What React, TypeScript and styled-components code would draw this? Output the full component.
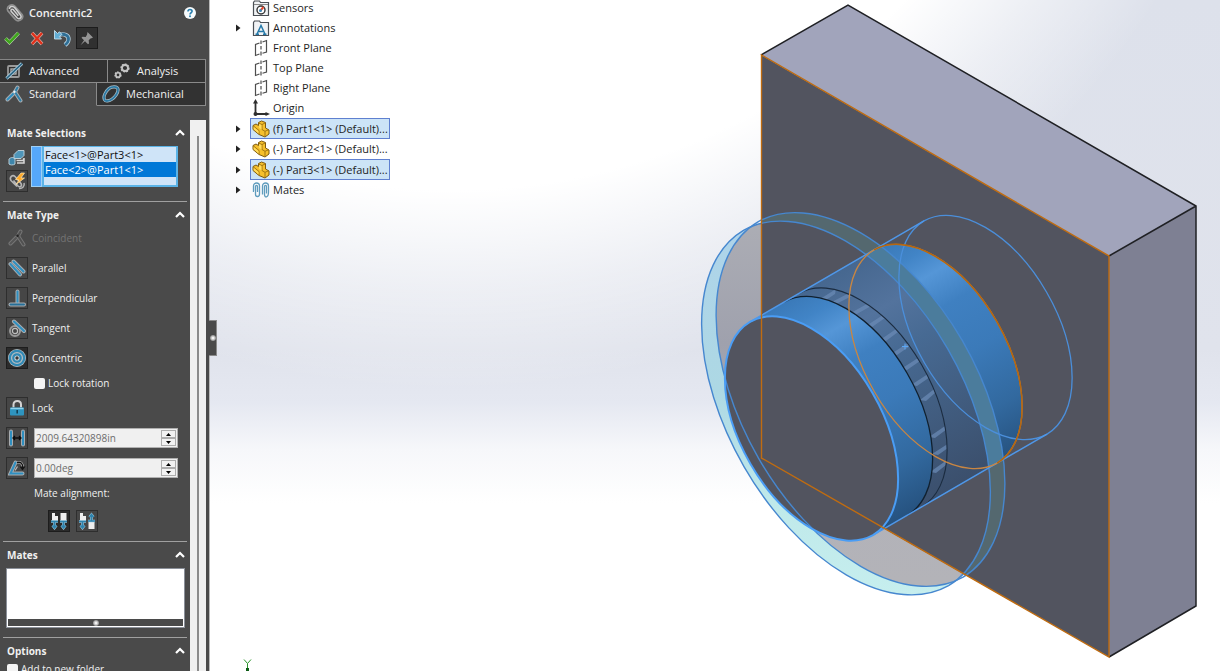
import React from "react";
import styled, { createGlobalStyle, css } from "styled-components";

const GlobalStyle = createGlobalStyle`
  *, *::before, *::after { box-sizing: border-box; }
  body { margin: 0; background: #fff; }
  body, button, input { font-family: "Open Sans", "Noto Sans", sans-serif; font-size: 11px; line-height: 16px; }
  h1, h2, ul, p { margin: 0; padding: 0; }
  ul { list-style: none; }
  button { margin: 0; padding: 0; border: 0; background: none; color: inherit; }
  svg { display: block; }
`;

const Page = styled.div`
  display: grid;
  grid-template-columns: 210px 1fr;
  height: 100vh;
  overflow: hidden;
`;

const Sidebar = styled.aside`
  display: flex;
  flex-direction: column;
  min-height: 0;
  height: 100vh;
  background: #4a4a4a;
  border-right: 1px solid #b9b9b9;
  color: #f0f0f0;
`;

const TitleBar = styled.header`
  display: flex;
  align-items: center;
  flex: none;
  height: 26px;
  padding: 0 13px 0 5px;
  gap: 4px;
`;

const Title = styled.h1`
  flex: 1;
  font-size: 11px;
  line-height: 16px;
  font-weight: 600;
`;

const Toolbar = styled.div`
  display: flex;
  align-items: center;
  flex: none;
  height: 24px;
  padding: 0 1px;
  gap: 3px;
`;

const ToolButton = styled.button<{ $pressed?: boolean }>`
  display: grid;
  place-items: center;
  flex: none;
  width: 22px;
  height: 22px;
  ${(p) => p.$pressed && css`background: #303030; border: 1px solid #1c1c1c;`}
`;

const TabRows = styled.nav`
  flex: none;
  margin: 9px 3px 0 0;
  border-top: 1px solid #858585;
`;

const TabRow = styled.div`
  display: flex;
  height: 23px;
`;

const Tab = styled.button<{ $active?: boolean; $width: number }>`
  display: flex;
  align-items: center;
  gap: 6px;
  flex: ${(p) => (p.$width ? `0 0 ${p.$width}px` : 1)};
  padding: 0 0 0 5px;
  text-align: left;
  background: #323232;
  border-right: 1px solid #8a8a8a;
  border-bottom: 1px solid #8a8a8a;
  ${(p) => p.$active && css`background: transparent; border-bottom-color: transparent;`}
`;

const Body = styled.div`
  display: flex;
  flex: 1;
  min-height: 0;
  margin-top: 14px;
`;

const Sections = styled.div`
  flex: 1;
  min-width: 0;
  overflow: hidden;
  padding: 0 3px;
  font-size: 10px;
`;

const ScrollTrack = styled.div`
  flex: none;
  width: 16px;
  margin-right: 3px;
  padding: 16px 7px 0;
  background: #f0f0f0;
`;

const ScrollThumb = styled.div`
  height: 100%;
  background: #8b8b8b;
`;

const Section = styled.section`
  padding-bottom: 9px;
  & + & { border-top: 1px solid #a0a0a0; }
`;

const SectionHead = styled.button`
  display: flex;
  align-items: center;
  justify-content: space-between;
  width: 100%;
  height: 26px;
  padding: 0 2px 0 4px;
`;

const SectionTitle = styled.span`
  font-size: 10px;
  line-height: 16px;
  font-weight: 700;
`;

/* Rows of a section, drawn up close under its heading. */
const Rows = styled.div`
  margin-top: -5px;
`;

const Selections = styled.div`
  display: flex;
  gap: 3px;
  padding: 0 9px 0 3px;
`;

const IconStack = styled.div`
  display: grid;
  gap: 2px;
`;

const IconBox = styled.button<{ $tone?: "plain" | "raised" | "dark" }>`
  display: grid;
  place-items: center;
  flex: none;
  width: 22px;
  height: 22px;
  border: 1px solid transparent;
  ${(p) => p.$tone === "raised" && css`border-color: #2e2e2e; background: #464646;`}
  ${(p) => p.$tone === "dark" && css`border-color: #1d1d1d; background: #2b2b2b;`}
`;

const SelectionList = styled.div`
  display: flex;
  flex: 1;
  height: 41px;
`;

const ColorStrip = styled.div`
  width: 11px;
  background: #56a8fb;
  border: 1px solid #9fd0f5;
`;

const SelectionItems = styled.ul`
  flex: 1;
  border: 2px solid #5bb3e6;
  border-top-width: 1px;
  background: #cfe4f8;
  color: #101010;
  font-size: 11px;
`;

const SelectionItem = styled.li<{ $selected?: boolean }>`
  height: 15px;
  padding-left: 1px;
  line-height: 15px;
  ${(p) => p.$selected && css`background: #0078d7; color: #fff;`}
`;

const MateRow = styled.div<{ $disabled?: boolean }>`
  display: flex;
  align-items: center;
  height: 30px;
  padding-left: 3px;
  gap: 4px;
  color: ${(p) => (p.$disabled ? "#747474" : "#f0f0f0")};
`;

const CheckRow = styled.label<{ $indent: number }>`
  display: flex;
  align-items: center;
  gap: 3px;
  height: 20px;
  padding-left: ${(p) => p.$indent}px;
`;

const CheckBox = styled.input`
  appearance: none;
  flex: none;
  width: 11px;
  height: 11px;
  margin: 0;
  border-radius: 2px;
  background: #f4f4f4;
`;

const Spinner = styled.div`
  display: flex;
  flex: 1;
  min-width: 0;
  height: 20px;
  margin: 0 9px 0 2px;
  padding: 1px;
  border: 1px solid #b0b0b0;
  background: #f0f0f0;
`;

const SpinInput = styled.input`
  flex: 1;
  min-width: 0;
  padding: 0;
  border: 0;
  background: transparent;
  color: #6d6d6d;
  font-size: 10px;
`;

const SpinButtons = styled.div`
  display: grid;
  grid-template-rows: 1fr 1fr;
  width: 15px;
`;

const SpinButton = styled.button`
  display: grid;
  place-items: center;
  border: 1px solid #adadad;
  background: #f2f2f2;
`;

const AlignLabel = styled.p`
  height: 20px;
  padding-left: 31px;
  line-height: 20px;
`;

const AlignRow = styled.div`
  display: flex;
  gap: 6px;
  padding: 7px 0 0 45px;
`;

const MatesList = styled.div`
  display: flex;
  flex-direction: column;
  height: 60px;
  margin: 0 2px 0 3px;
  border: 1px solid #8b9099;
  background: #fff;
`;

const MatesGrip = styled.div`
  display: grid;
  place-items: center;
  height: 7px;
  margin: auto 1px 1px;
  background: #4a4a4a;
`;

const GripDot = styled.span`
  width: 6px;
  height: 6px;
  border-radius: 50%;
  background: radial-gradient(#fff 10%, #6a6a6a 90%);
`;

const Viewport = styled.main`
  display: grid;
  min-width: 0;
  min-height: 0;
  background:
    radial-gradient(circle at 240px -450px, #fff 640px, rgba(255, 255, 255, 0.45) 740px, rgba(255, 255, 255, 0) 840px),
    linear-gradient(180deg, #dde1eb 0%, #e0e3ec 52%, #e5e8f1 60%, #f6f7fa 67%, #fff 75%);
  & > * { grid-area: 1 / 1; }
`;

const Model = styled.svg`
  width: 100%;
  height: 100%;
`;

const SplitterHandle = styled.button`
  display: grid;
  place-items: center;
  align-self: center;
  justify-self: start;
  z-index: 1;
  width: 8px;
  height: 36px;
  margin: 4px 0 0 -1px;
  border: 1px solid #8a8a8a;
  border-left: 0;
  background: #4a4a4a;
`;

const Tree = styled.ul`
  align-self: start;
  justify-self: start;
  z-index: 1;
  margin: -2px 0 0 25px;
  color: #1e1e1e;
`;

const TreeRow = styled.li`
  display: flex;
  align-items: center;
`;

const Twisty = styled.span`
  width: 15px;
`;

const TreeLabel = styled.button<{ $selected?: boolean }>`
  display: flex;
  align-items: center;
  gap: 3px;
  height: ${(p) => (p.$selected ? 21 : 20)}px;
  padding: 0 1px;
  border: 1px solid ${(p) => (p.$selected ? "#5f80d0" : "transparent")};
  background: ${(p) => (p.$selected ? "#cce4f7" : "transparent")};
  white-space: nowrap;
`;

type IconProps = { size?: number; children: React.ReactNode };
const Icon = ({ size = 18, children }: IconProps) => (
  <svg width={size} height={size} viewBox="0 0 18 18" fill="none" aria-hidden="true">
    {children}
  </svg>
);

/* A light-edged bar, the stroke style shared by the mate icons. */
const Bar = ({ d, color = "#2f8fc0", edge = "#a9adb0" }: { d: string; color?: string; edge?: string }) => (
  <>
    <path d={d} stroke={edge} strokeWidth="4" strokeLinecap="round" />
    <path d={d} stroke={color} strokeWidth="2" strokeLinecap="round" />
  </>
);

const ClipIcon = () => (
  <Icon size={20}>
    <path d="M5.500 10.500 9.500 15c2.500 2.500 8-.5 6-4.500L9 3C6.500.3.800 2.500 2.500 7l3 3.500" stroke="#8f8f8f" strokeWidth="1.500" />
    <path d="M4 5.500c0-3 3.500-3 5-1l5 6.500c1.500 2-1 4.300-3 2.500L5.500 7.500c-.7-1.500 1-2.500 2-1.500l4.500 5.500" stroke="#cfcfcf" strokeWidth="1.400" />
  </Icon>
);

const HelpIcon = () => (
  <svg width="12" height="12" viewBox="0 0 12 12">
    <circle cx="6" cy="6" r="6" fill="#f7fbfd" />
    <path d="M4 4.600c0-2.700 4.100-2.600 4.100-.3C8.100 5.800 6 5.700 6 7.500" fill="none" stroke="#2a7fae" strokeWidth="1.600" />
    <circle cx="6" cy="9.300" r="1" fill="#2a7fae" />
  </svg>
);

const OkIcon = () => (
  <Icon size={18}>
    <path d="M2.500 9.500 6.500 13.500 15.500 4" stroke="#c9dcc0" strokeWidth="3.600" />
    <path d="M2.500 9.500 6.500 13.500 15.500 4" stroke="#3fa51c" strokeWidth="2.600" />
  </Icon>
);

const CancelIcon = () => (
  <Icon size={18}>
    <path d="M4 4 14 15M14 4 4 15" stroke="#d6b1aa" strokeWidth="3.600" />
    <path d="M4 4 14 15M14 4 4 15" stroke="#e0301a" strokeWidth="2.400" />
  </Icon>
);

const UndoIcon = () => (
  <Icon size={18}>
    <path d="M6 6c5-2 10 .5 9.500 4.500-.2 2.300-1.500 4-3.500 5.500" stroke="#b9d4e3" strokeWidth="4.200" />
    <path d="M6 6c5-2 10 .5 9.500 4.500-.2 2.300-1.500 4-3.500 5.500" stroke="#2f6f96" strokeWidth="2.800" />
    <path d="M1.500 1.500v8.500h7L6.300 7.500 9 5.500 6.500 2.800 4.500 4.500z" fill="#62aed6" stroke="#c5dfec" strokeWidth=".9" />
  </Icon>
);

const PinIcon = () => (
  <Icon size={18}>
    <path d="M9.500 3 15 8.500l-1.500.7-1 .3-1.800 1.800.3 3.200-1 .8-3-3-4.500 4 3.500-5-2.500-2.500 1-1 3.200.2L9 5.800z" fill="#949494" />
  </Icon>
);

const AdvancedIcon = () => (
  <Icon size={18}>
    <rect x="3" y="4" width="11" height="11" rx="1" stroke="#9a9a9a" strokeWidth="1.800" />
    <rect x="6" y="7" width="5" height="5" stroke="#b5b5b5" strokeWidth="1.300" />
    <path d="M1.500 16.500 17 1.500" stroke="#a9c8d8" strokeWidth="3.200" />
    <path d="M1.500 16.500 17 1.500" stroke="#25607f" strokeWidth="1.600" />
  </Icon>
);

const AnalysisIcon = () => (
  <Icon size={18}>
    <circle cx="12" cy="6" r="3.600" stroke="#d0d0d0" strokeWidth="2" strokeDasharray="1.800 .9" />
    <circle cx="12" cy="6" r="3" stroke="#c4c4c4" strokeWidth="1.800" />
    <circle cx="5" cy="13" r="2.700" stroke="#d0d0d0" strokeWidth="1.800" strokeDasharray="1.500 .8" />
    <circle cx="5" cy="13" r="2.200" stroke="#c4c4c4" strokeWidth="1.600" />
  </Icon>
);

const CoincidentIcon = ({ muted = false }: { muted?: boolean }) => (
  <Icon size={18}>
    <Bar d="M2.500 14.500 8.500 8.500" color={muted ? "#555" : "#2f8fc0"} edge={muted ? "#767676" : "#a9adb0"} />
    <Bar d="M12.500 2.500 10 7l5.500 8.500" color={muted ? "#505050" : "#2f7fa8"} edge={muted ? "#767676" : "#a9adb0"} />
    <circle cx="9.500" cy="6.800" r="1.200" fill={muted ? "#222" : "#e8f4fa"} />
  </Icon>
);

const CamIcon = () => (
  <Icon>
    <path d="M2.500 14.800C.8 11.500 3.500 6.500 7 3.500c2.500-2 8.500-2.500 9 .8.400 3.200-3 8-6.500 10.200-2.500 1.600-6 2.200-7 .3z" stroke="#a9bcc6" strokeWidth="3.200" />
    <path d="M2.500 14.800C.8 11.500 3.500 6.500 7 3.500c2.500-2 8.500-2.500 9 .8.400 3.200-3 8-6.500 10.200-2.500 1.600-6 2.200-7 .3z" stroke="#2c7ba5" strokeWidth="1.800" />
  </Icon>
);

const EntitiesIcon = () => (
  <Icon size={18}>
    <path d="M1 11c2-2 5-2 6 0v5c-2 1.500-5 1-6 0z" fill="#3f86ab" stroke="#b8ccd6" />
    <path d="M6 6.500l4-4h6v5l-3 3H6z" fill="#4f96ba" stroke="#b8ccd6" />
    <path d="M8.500 12.500h7v-2M16 10v5H9" stroke="#d8d8d8" strokeWidth="1.500" />
  </Icon>
);

const MultiMateIcon = () => (
  <Icon size={18}>
    <path d="M9 14.500 3 8.500C1 5.500 4.500 2 7 4.500l6 7c1.500 2.500-1 4.500-3 2.500L5.500 8.500" stroke="#b5b5b5" strokeWidth="1.600" />
    <path d="M16 11c1 3-1.500 6-5 5.500" stroke="#b5b5b5" strokeWidth="1.500" />
    <path d="M13 1 7.500 7.500l3.500.5-3 4.500L16.500 6H13l3.500-5z" fill="#ffa928" stroke="#ffe9b8" strokeWidth=".7" />
  </Icon>
);

const ParallelIcon = () => (
  <Icon>
    <Bar d="M2.500 5 12 15.500" />
    <Bar d="M5.500 2.500 15.500 12.500" />
  </Icon>
);

const PerpendicularIcon = () => (
  <Icon>
    <Bar d="M9.500 2.500V14" />
    <Bar d="M2.500 15.500h13.500" color="#256f98" />
  </Icon>
);

const TangentIcon = () => (
  <Icon>
    <circle cx="7" cy="12" r="5" stroke="#9a9a9a" strokeWidth="2" />
    <circle cx="7" cy="12" r="2.600" stroke="#c0c0c0" strokeWidth="1.200" />
    <Bar d="M6 2.500 16 12" />
  </Icon>
);

const ConcentricIcon = () => (
  <Icon>
    <circle cx="9" cy="9" r="9" fill="#b4bcc0" />
    <circle cx="9" cy="9" r="7.200" stroke="#3189b4" strokeWidth="2.200" />
    <circle cx="9" cy="9" r="3.700" fill="#d5dde1" stroke="#3189b4" strokeWidth="2.200" />
    <circle cx="9" cy="9" r="1.700" fill="#3a3a3a" />
  </Icon>
);

const LockIcon = () => (
  <Icon>
    <path d="M5.500 8.500V5.500C5.500.7 13 .7 13 5.500v3" stroke="#d3d3d3" strokeWidth="2" />
    <rect x="2" y="8.500" width="14" height="8" rx="1" fill="#2e94bf" />
    <path d="M2.500 9.500h13" stroke="#8fd2ec" strokeWidth="1.500" />
    <path d="M9.200 11v3.500" stroke="#123e52" strokeWidth="1.600" />
  </Icon>
);

const DistanceIcon = () => (
  <Icon>
    <Bar d="M3 2.500v13" />
    <Bar d="M15 2.500v13" />
    <path d="M5 9h8M7 7 5 9l2 2M11 7l2 2-2 2" stroke="#0c0c0c" strokeWidth="1.300" />
  </Icon>
);

const AngleIcon = () => (
  <Icon>
    <Bar d="M7.500 3.500 2.500 14.500h12" />
    <path d="M9 3.500c4-1 6 1.500 5.500 5" stroke="#c2c2c2" strokeWidth="2.500" />
    <path d="M9 3.500c4-1 6 1.500 5.500 5" stroke="#141414" strokeWidth="1.300" />
    <path d="M11.500 7.500h6l-3 4z" fill="#141414" />
    <path d="M7 11.500 9.500 7.500" stroke="#bbb" strokeWidth="1.200" />
  </Icon>
);

const Arrow = ({ d }: { d: string }) => (
  <>
    <path d={d} stroke="#9ec5d9" strokeWidth="2.600" />
    <path d={d} stroke="#2d83ae" strokeWidth="1.500" />
  </>
);

const AlignedIcon = ({ anti = false }: { anti?: boolean }) => (
  <Icon>
    <path d="M2 1h3v3h3v5H2z" fill="#eee" />
    <Arrow d="M1 9.500h7M4.500 9.500v6M2.500 13.500l2 2.500 2-2.500" />
    <path d={anti ? "M10.500 10h6v7h-6z" : "M10.500 1h6v8h-6z"} fill="#eee" />
    <Arrow d={anti ? "M10 9h7M13.500 9V3M11.500 5l2-2.500 2 2.500" : "M10 9.500h7M13.500 9.500v6M11.500 13.500l2 2.500 2-2.500"} />
  </Icon>
);

const ChevronUp = () => (
  <svg width="10" height="8" viewBox="0 0 10 8" fill="none" aria-hidden="true">
    <path d="M1 6 5 2l4 4" stroke="#fff" strokeWidth="2.200" />
  </svg>
);

const Triangle = ({ down = false }: { down?: boolean }) => (
  <svg width="5" height="3" viewBox="0 0 5 3" aria-hidden="true">
    <path d={down ? "M0 0h5L2.500 3z" : "M0 3h5L2.500 0z"} fill="#000" />
  </svg>
);

const FolderShape = () => (
  <path d="M1.500 16.500V3.500l1-1.500h5l1 1.500h8v13z" fill="#f1f3f5" stroke="#4a4f55" strokeWidth="1.200" />
);

const SensorsIcon = () => (
  <Icon>
    <FolderShape />
    <path d="M2 5.500h14" stroke="#888" />
    <circle cx="9" cy="11" r="4" fill="#fff" stroke="#333" strokeWidth="1.400" />
    <path d="M8.500 11.500 11.500 8" stroke="#e2482f" strokeWidth="2" />
    <circle cx="8.500" cy="11.500" r="1.500" fill="#3d88b8" />
  </Icon>
);

const AnnotationsIcon = () => (
  <Icon>
    <FolderShape />
    <path d="M5 15 9 6.500 13 15M6.500 12.500h5M3.500 15.200h3.500M11 15.200h3.500" stroke="#2478a8" strokeWidth="1.500" />
  </Icon>
);

const PlaneIcon = () => (
  <Icon>
    <path d="M7.500 4 3.500 5.500V16.500L7.500 15M10.500 3l4-1.500V13l-4 1.200" stroke="#4d4d4d" strokeWidth="1.200" />
    <path d="M9 1.500v3.500M9 7v3.500M9 12.500V16.500" stroke="#4d4d4d" strokeWidth="1.200" />
  </Icon>
);

const OriginIcon = () => (
  <Icon>
    <path d="M3.500 4v11H15" stroke="#2e2e2e" strokeWidth="1.800" />
    <path d="M3.500 0 6 4.500H1zM18 15l-4.500 2v-4z" fill="#2e2e2e" />
    <circle cx="3.500" cy="15" r="2" fill="#2e2e2e" />
  </Icon>
);

const PartIcon = () => (
  <Icon>
    <path d="M1 5.500 4 4l2.500 1.500V2.500L9.500 1l4 1.500V8l3.500 2v4l-4 3L7 14.500 1 9.500z" fill="#f6c02c" stroke="#7d5a10" />
    <path d="M6.500 3 10 4.500v5l3 1.800v5M10 4.500l3-1.500M13 11.300l3.500-1.500M1.500 6l5.500 4.500V14" stroke="#9a7010" strokeWidth=".9" />
    <path d="M7 4 9.500 5v4.300L7 8zM1.700 7l4.800 4v2.500L1.700 9.200z" fill="#ffdc5e" />
  </Icon>
);

const MatesIcon = () => (
  <Icon>
    <path d="M1.500 11V5c0-4 6-4 6 0v8c0 3.500-4 3-4 .5V5.500c0-1.500 2-1.500 2 0V11" stroke="#5f9cbd" strokeWidth="1.300" />
    <path d="M10.500 13.500V5c0-4 6-4 6 0v6c0 6-4 6-4 2.500V5.500c0-1.500 2-1.500 2 0v7" stroke="#5f9cbd" strokeWidth="1.300" />
  </Icon>
);

const tree: { label: string; icon: React.ReactNode; expandable?: boolean; selected?: boolean }[] = [
  { label: "Sensors", icon: <SensorsIcon /> },
  { label: "Annotations", icon: <AnnotationsIcon />, expandable: true },
  { label: "Front Plane", icon: <PlaneIcon /> },
  { label: "Top Plane", icon: <PlaneIcon /> },
  { label: "Right Plane", icon: <PlaneIcon /> },
  { label: "Origin", icon: <OriginIcon /> },
  { label: "(f) Part1<1> (Default)...", icon: <PartIcon />, expandable: true, selected: true },
  { label: "(-) Part2<1> (Default)...", icon: <PartIcon />, expandable: true },
  { label: "(-) Part3<1> (Default)...", icon: <PartIcon />, expandable: true, selected: true },
  { label: "Mates", icon: <MatesIcon />, expandable: true },
];

const mateTypes: { label: string; icon: React.ReactNode; tone: "plain" | "raised" | "dark"; disabled?: boolean }[] = [
  { label: "Coincident", icon: <CoincidentIcon muted />, tone: "plain", disabled: true },
  { label: "Parallel", icon: <ParallelIcon />, tone: "raised" },
  { label: "Perpendicular", icon: <PerpendicularIcon />, tone: "raised" },
  { label: "Tangent", icon: <TangentIcon />, tone: "raised" },
  { label: "Concentric", icon: <ConcentricIcon />, tone: "dark" },
];

/* Isometric circles: every one is the same ellipse shape turned by 60 degrees. */
const LONG = 1.2247;
const SHORT = 0.7071;

type Ring = { cx: number; cy: number; r: number };
const SHAFT_R = 100.5;
const DISC_R = 167.5;
const front: Ring = { cx: 811.5, cy: 428.5, r: SHAFT_R };
const discCutFront: Ring = { cx: 846, cy: 408.5, r: SHAFT_R };
const discCutBack: Ring = { cx: 860.5, cy: 400, r: SHAFT_R };
const seat: Ring = { cx: 935.5, cy: 356.5, r: SHAFT_R };
const rear: Ring = { cx: 985.5, cy: 327.5, r: SHAFT_R };
const discFront: Ring = { cx: 846, cy: 408, r: DISC_R };
const discBack: Ring = { cx: 860.5, cy: 399.5, r: DISC_R };

const axisEnds = ({ cx, cy, r }: Ring) => {
  const dx = r * LONG * 0.5;
  const dy = r * LONG * 0.866;
  return { top: `${cx - dx} ${cy - dy}`, bottom: `${cx + dx} ${cy + dy}` };
};
const arcTo = (r: number, sweep: 0 | 1, point: string) => `A${r * LONG} ${r * SHORT} 60 0 ${sweep} ${point}`;
const ringPath = (ring: Ring) => {
  const { top, bottom } = axisEnds(ring);
  return `M${top}${arcTo(ring.r, 1, bottom)}${arcTo(ring.r, 1, top)}Z`;
};
const backHalf = (ring: Ring) => {
  const { top, bottom } = axisEnds(ring);
  return `M${top}${arcTo(ring.r, 1, bottom)}`;
};
/* Visible side of the shaft between two of its circles. */
const shaftSide = (a: Ring, b: Ring) => {
  const p = axisEnds(a);
  const q = axisEnds(b);
  return `M${p.top}L${q.top}${arcTo(b.r, 1, q.bottom)}L${p.bottom}${arcTo(a.r, 0, p.top)}Z`;
};
const silhouette = (a: Ring, b: Ring) => {
  const p = axisEnds(a);
  const q = axisEnds(b);
  return `M${p.top}L${q.top}M${p.bottom}L${q.bottom}`;
};

const glints = [
  [819, 297, 834, 290], [830, 300, 851, 292], [851, 310, 872, 301], [868, 322, 884, 314],
  [882, 336, 897, 328], [893, 350, 909, 342], [903, 365, 919, 357], [913, 381, 929, 373],
  [922, 396, 935, 388], [931, 433, 946, 425], [934, 450, 947, 444], [932, 468, 945, 461],
];

const AssemblyModel = () => (
  <Model viewBox="210 0 1010 671" preserveAspectRatio="xMidYMid meet" role="img" aria-label="Assembly model">
    <defs>
      <linearGradient id="shaft" gradientUnits="userSpaceOnUse" x1="749.7" y1="321.5" x2="873.3" y2="535.5">
        <stop offset="0" stopColor="#3a79b8" />
        <stop offset=".1" stopColor="#4184c6" />
        <stop offset=".2" stopColor="#5596d7" />
        <stop offset=".34" stopColor="#3f80c1" />
        <stop offset=".55" stopColor="#3b7ab9" />
        <stop offset=".8" stopColor="#32699f" />
        <stop offset="1" stopColor="#26527f" />
      </linearGradient>
      <linearGradient id="veil" gradientUnits="userSpaceOnUse" x1="749.7" y1="321.5" x2="873.3" y2="535.5">
        <stop offset="0" stopColor="#46678f" />
        <stop offset=".22" stopColor="#53739d" />
        <stop offset=".4" stopColor="#476a93" />
        <stop offset="1" stopColor="#3b4f6c" />
      </linearGradient>
      <linearGradient id="rim" x1="0" y1="0" x2="0" y2="1">
        <stop offset="0" stopColor="#aed3ea" />
        <stop offset=".45" stopColor="#add8e4" />
        <stop offset=".75" stopColor="#bfe9ea" />
        <stop offset="1" stopColor="#c6eeee" />
      </linearGradient>
      <linearGradient id="glass" x1="0" y1="0" x2="0" y2="1">
        <stop offset="0" stopColor="#adaeb5" />
        <stop offset=".35" stopColor="#9fa1ad" />
        <stop offset=".75" stopColor="#b2b2b9" />
        <stop offset="1" stopColor="#b3b3b8" />
      </linearGradient>
      <clipPath id="inDiscFront"><path d={ringPath(discFront)} /></clipPath>
      <clipPath id="inDiscBack"><path d={ringPath(discBack)} /></clipPath>
      <clipPath id="onPlate"><path d="M761 55 1109 256V657L761 458Z" /></clipPath>
      <clipPath id="onShaft"><path d={shaftSide(front, seat)} /></clipPath>
      <clipPath id="sharedBand"><path d={shaftSide(discCutFront, discCutBack)} /></clipPath>
    </defs>

    <path d={ringPath(discFront)} fill="url(#rim)" />
    <g clipPath="url(#inDiscFront)"><path d={ringPath(discBack)} fill="url(#glass)" /></g>

    <path d="M761 55 848 5 1196 206 1109 256Z" fill="#a1a4bb" />
    <path d="M1109 256 1196 206V606L1109 657Z" fill="#7e8093" />
    <path d="M761 55 1109 256V657L761 458Z" fill="#52545f" />
    <path d="M761 55 848 5 1196 206V606L1109 657M1109 256 1196 206" fill="none" stroke="#1f2024" strokeWidth="1.500" />

    <g clipPath="url(#onPlate)">
      <path d={ringPath(discBack) + ringPath(discFront)} fillRule="evenodd" fill="#54686f" />
      <g clipPath="url(#inDiscFront)"><path d={ringPath(discBack)} fill="#52545f" /></g>
    </g>

    <path d={ringPath(front)} fill="#52545f" />
    <path d={shaftSide(front, seat)} fill="url(#shaft)" />
    <g clipPath="url(#onShaft)">
      <g clipPath="url(#inDiscBack)"><path d={shaftSide(discCutFront, seat)} fill="#4b7c9c" /></g>
      <g clipPath="url(#inDiscFront)">
        <path d={shaftSide(discCutFront, seat)} fill="url(#veil)" />
        <g clipPath="url(#sharedBand)">
          {glints.map(([x1, y1, x2, y2]) => (
            <path key={`${x1}-${y1}`} d={`M${x1 - 2} ${y1 + 4}L${x2 + 2} ${y2 - 1}L${x2 + 1} ${y2 + 4}L${x1 + 4} ${y1 + 5}Z`} fill="#6a8ab4" fillOpacity=".75" />
          ))}
        </g>
      </g>
    </g>

    <g fill="none">
      <path d={backHalf(discCutFront)} stroke="#10202f" strokeWidth="1.300" />
      <path d={backHalf(discCutBack)} stroke="#1b2c40" strokeWidth="1.100" />
      <path d={ringPath(discFront)} stroke="#4687cf" strokeWidth="1.400" />
      <path d={ringPath(discBack)} stroke="#4687cf" strokeWidth="1.400" />
      <path d={ringPath(rear)} stroke="#4b8fdb" strokeWidth="1.300" />
      <path d={silhouette(front, rear)} stroke="#4f97e8" strokeWidth="1.500" />
      <path d={ringPath(seat)} stroke="#c98642" strokeWidth="1.300" />
      <path d={backHalf(seat)} stroke="#b5660f" strokeWidth="1.500" />
      <path d={ringPath(front)} stroke="#4a9df5" strokeWidth="2" />
      <path d="M761.500 55V458L1109 657V256Z" stroke="#c06c10" strokeWidth="1.400" />
      <path d="M902 346.500h6M905 343.500v6" stroke="#5aa7f5" />
    </g>

    <g fill="none" stroke="#2c962c">
      <path d="M244 659.500 247.500 663.500 251 659.500M247.500 663.500V668" />
      <path d="M247.500 668v3" stroke="#0d5c16" strokeWidth="3" />
    </g>
  </Model>
);

const SpinField = ({ label, value }: { label: string; value: string }) => (
  <Spinner>
    <SpinInput aria-label={label} defaultValue={value} />
    <SpinButtons>
      <SpinButton aria-label={`Increase ${label}`}><Triangle /></SpinButton>
      <SpinButton aria-label={`Decrease ${label}`}><Triangle down /></SpinButton>
    </SpinButtons>
  </Spinner>
);

const Heading = ({ children }: { children: string }) => (
  <SectionHead aria-expanded="true">
    <SectionTitle>{children}</SectionTitle>
    <ChevronUp />
  </SectionHead>
);

export default function App() {
  return (
    <>
      <GlobalStyle />
      <Page>
        <Sidebar>
          <TitleBar>
            <ClipIcon />
            <Title>Concentric2</Title>
            <button aria-label="Help"><HelpIcon /></button>
          </TitleBar>
          <Toolbar>
            <ToolButton aria-label="OK"><OkIcon /></ToolButton>
            <ToolButton aria-label="Cancel"><CancelIcon /></ToolButton>
            <ToolButton aria-label="Undo"><UndoIcon /></ToolButton>
            <ToolButton aria-label="Keep visible" $pressed><PinIcon /></ToolButton>
          </Toolbar>
          <TabRows>
            <TabRow>
              <Tab $width={108}><AdvancedIcon />Advanced</Tab>
              <Tab $width={0}><AnalysisIcon />Analysis</Tab>
            </TabRow>
            <TabRow>
              <Tab $width={97} $active><CoincidentIcon />Standard</Tab>
              <Tab $width={0}><CamIcon />Mechanical</Tab>
            </TabRow>
          </TabRows>
          <Body>
            <Sections>
              <Section>
                <Heading>Mate Selections</Heading>
                <Selections>
                  <IconStack>
                    <IconBox aria-label="Entities to mate"><EntitiesIcon /></IconBox>
                    <IconBox aria-label="Multiple mate mode" $tone="raised"><MultiMateIcon /></IconBox>
                  </IconStack>
                  <SelectionList>
                    <ColorStrip />
                    <SelectionItems>
                      <SelectionItem>{"Face<1>@Part3<1>"}</SelectionItem>
                      <SelectionItem $selected>{"Face<2>@Part1<1>"}</SelectionItem>
                    </SelectionItems>
                  </SelectionList>
                </Selections>
              </Section>
              <Section>
                <Heading>Mate Type</Heading>
                <Rows>
                  {mateTypes.map((m) => (
                    <MateRow key={m.label} $disabled={m.disabled}>
                      <IconBox aria-label={m.label} $tone={m.tone}>{m.icon}</IconBox>
                      {m.label}
                    </MateRow>
                  ))}
                  <CheckRow $indent={31}><CheckBox type="checkbox" />Lock rotation</CheckRow>
                  <MateRow>
                    <IconBox aria-label="Lock" $tone="raised"><LockIcon /></IconBox>
                    Lock
                  </MateRow>
                  <MateRow>
                    <IconBox aria-label="Distance" $tone="raised"><DistanceIcon /></IconBox>
                    <SpinField label="Distance value" value="2009.64320898in" />
                  </MateRow>
                  <MateRow>
                    <IconBox aria-label="Angle" $tone="raised"><AngleIcon /></IconBox>
                    <SpinField label="Angle value" value="0.00deg" />
                  </MateRow>
                  <AlignLabel>Mate alignment:</AlignLabel>
                  <AlignRow>
                    <IconBox aria-label="Aligned" $tone="dark"><AlignedIcon /></IconBox>
                    <IconBox aria-label="Anti-aligned" $tone="raised"><AlignedIcon anti /></IconBox>
                  </AlignRow>
                </Rows>
              </Section>
              <Section>
                <Heading>Mates</Heading>
                <MatesList>
                  <MatesGrip><GripDot /></MatesGrip>
                </MatesList>
              </Section>
              <Section>
                <Heading>Options</Heading>
                <Rows>
                  <CheckRow $indent={4}><CheckBox type="checkbox" />Add to new folder</CheckRow>
                </Rows>
              </Section>
            </Sections>
            <ScrollTrack><ScrollThumb /></ScrollTrack>
          </Body>
        </Sidebar>
        <Viewport>
          <AssemblyModel />
          <Tree>
            {tree.map((node) => (
              <TreeRow key={node.label}>
                <Twisty>
                  {node.expandable && (
                    <svg width="6" height="8" viewBox="0 0 6 8" aria-hidden="true"><path d="M1 0.500 5.500 4 1 7.500z" fill="#222" /></svg>
                  )}
                </Twisty>
                <TreeLabel $selected={node.selected}>{node.icon}{node.label}</TreeLabel>
              </TreeRow>
            ))}
          </Tree>
          <SplitterHandle aria-label="Collapse panel"><GripDot /></SplitterHandle>
        </Viewport>
      </Page>
    </>
  );
}
